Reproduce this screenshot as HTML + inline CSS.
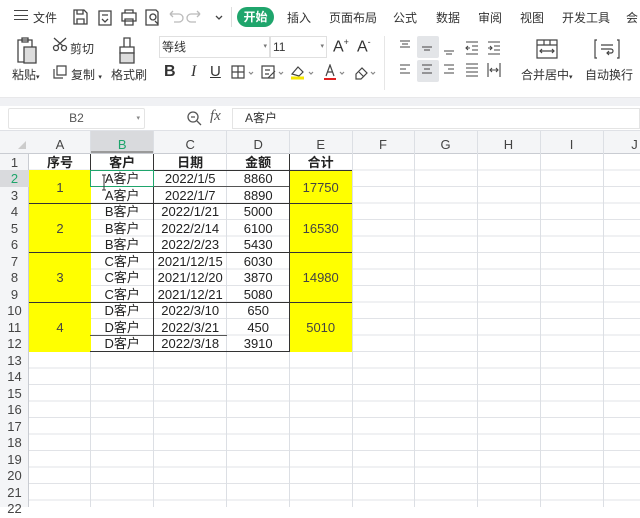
<!DOCTYPE html>
<html><head><meta charset="utf-8"><style>
*{margin:0;padding:0;box-sizing:border-box}
body{width:640px;height:507px;overflow:hidden;background:#fff;font-family:"Liberation Sans","Noto Sans CJK SC",sans-serif;color:#333;position:relative}
.a{position:absolute;white-space:nowrap}
.m{font-size:12px;top:9px;color:#333}
.c{position:absolute;text-align:center;font-size:13px;line-height:16.5px;padding-top:1px;color:#222;white-space:nowrap}
.vl{position:absolute;width:1px;background:#dcdfe4}
.hl{position:absolute;height:1px}
.rn{position:absolute;left:0;width:29px;text-align:center;font-size:13px;line-height:16.5px;padding-top:1px;color:#444}
.ch{position:absolute;top:137px;text-align:center;font-size:13px;color:#444}
</style></head><body>
<div class="a" style="left:14px;top:10px;width:14px;height:10px;border-top:1.5px solid #444;border-bottom:1.5px solid #444"></div>
<div class="a" style="left:14px;top:14.5px;width:14px;height:1.5px;background:#444"></div>
<div class="a m" style="left:33px">文件</div>
<svg class="a" style="left:72px;top:8px" width="160" height="20" fill="none" stroke="#444" stroke-width="1.3">
<path d="M2 2h10l3 3v11H2z M5 2v4h6V2 M5 16v-5h7v5"/>
<path d="M27 3h12v14H27z M30 7h6 M30 11l3 3 3-3"/>
<path d="M50 5h14v8H50z M53 5V2h8v3 M53 11h8v6h-8z"/>
<path d="M74 2h10l2 2v13H74z M81 12a3 3 0 1 0-.1 0 M83 13l3 3"/>
<path d="M98 6h9a4 4 0 0 1 0 8h-5 M98 6l3-3 M98 6l3 3" stroke="#bbb"/>
<path d="M128 6h-9a4 4 0 0 0 0 8h5 M128 6l-3-3 M128 6l-3 3" stroke="#bbb"/>
<path d="M144 8l3 3 3-3"/>
</svg>
<div class="a" style="left:231px;top:7px;width:1px;height:20px;background:#ddd"></div>
<div class="a" style="left:237px;top:7px;width:37px;height:20px;border-radius:10px;background:#1fa56c;color:#fff;font-size:12px;text-align:center;line-height:20px;font-weight:bold">开始</div>
<div class="a m" style="left:287px">插入</div>
<div class="a m" style="left:329px">页面布局</div>
<div class="a m" style="left:393px">公式</div>
<div class="a m" style="left:436px">数据</div>
<div class="a m" style="left:478px">审阅</div>
<div class="a m" style="left:520px">视图</div>
<div class="a m" style="left:562px">开发工具</div>
<div class="a m" style="left:626px">会</div>
<svg class="a" style="left:14px;top:36px" width="140" height="30" fill="none" stroke="#444" stroke-width="1.3">
<path d="M4 4h14v22H4z M8 2h6v4H8z"/><path d="M10 11h12v16H10z" fill="#ddd"/>
<circle cx="42" cy="12" r="2.5"/><circle cx="50" cy="12" r="2.5"/><path d="M40 2l9 8 M52 2l-9 8"/>
<path d="M110 2h6v9h-6z M106 11h14v6h-14z" /><path d="M106 17h14v10h-14z" fill="#ddd"/>
</svg>
<div class="a" style="left:12px;top:66px;font-size:12px">粘贴<span style="font-size:7px">▾</span></div>
<svg class="a" style="left:52px;top:64px" width="16" height="16" fill="none" stroke="#444" stroke-width="1.2"><path d="M5 2h9v9H5z M2 5v9h9"/></svg>
<div class="a" style="left:71px;top:66px;font-size:12px">复制 <span style="font-size:7px">▾</span></div>
<div class="a" style="left:70px;top:40px;font-size:12px">剪切</div>
<div class="a" style="left:111px;top:66px;font-size:12px">格式刷</div>
<div class="a" style="left:159px;top:36px;width:111px;height:22px;border:1px solid #e0e0e0;font-size:12px;line-height:20px;padding-left:2px">等线<span style="position:absolute;right:2px;font-size:7px;color:#777">▾</span></div>
<div class="a" style="left:270px;top:36px;width:57px;height:22px;border:1px solid #e0e0e0;font-size:12px;line-height:20px;padding-left:2px">11<span style="position:absolute;right:2px;font-size:7px;color:#777">▾</span></div>
<div class="a" style="left:333px;top:37px;font-size:16px">A<sup style="font-size:9px">+</sup></div>
<div class="a" style="left:357px;top:37px;font-size:16px">A<sup style="font-size:9px">-</sup></div>
<div class="a" style="left:164px;top:63px;font-size:16px;font-weight:bold">B</div>
<div class="a" style="left:191px;top:63px;font-size:16px;font-style:italic;font-family:'Liberation Serif',serif">I</div>
<div class="a" style="left:210px;top:63px;font-size:15px;text-decoration:underline">U</div>
<svg class="a" style="left:230px;top:64px" width="150" height="18" fill="none" stroke="#444" stroke-width="1.2">
<path d="M2 2h12v12H2z M8 2v12 M2 8h12"/><path d="M19 8l2 2 2-2" stroke="#888"/>
<path d="M32 2h12v12H32z M35 6h5 M35 10h4 M38 14l7-7"/><path d="M49 8l2 2 2-2" stroke="#888"/>
<path d="M62 10l6-7 5 5-4 4z"/><path d="M61 14h13" stroke="#f5e600" stroke-width="3"/><path d="M79 8l2 2 2-2" stroke="#888"/>
<path d="M96 12l4-11 4 11 M97.5 8h5"/><path d="M94 15h12" stroke="#e02020" stroke-width="2"/><path d="M110 8l2 2 2-2" stroke="#888"/>
<path d="M126 10l6-6 5 5-6 6h-5z M129 8l5 5"/><path d="M141 8l2 2 2-2" stroke="#888"/>
</svg>
<div class="a" style="left:384px;top:36px;width:1px;height:54px;background:#e6e6e6"></div>
<div class="a" style="left:417px;top:36px;width:22px;height:22px;background:#e3e5e8;border-radius:2px"></div>
<div class="a" style="left:417px;top:60px;width:22px;height:22px;background:#e3e5e8;border-radius:2px"></div>
<svg class="a" style="left:396px;top:38px" width="130" height="44" fill="none" stroke="#444" stroke-width="1.1">
<path d="M4 3h10 M6 6h6 M4 9h10"/><path d="M26 9h10 M28 12h6"/><path d="M48 13h10 M50 16h6"/>
<path d="M70 4h12 M76 8h6 M76 12h6 M70 16h12 M74 10h-4 M72 8l-2 2 2 2"/>
<path d="M92 4h12 M98 8h6 M98 12h6 M92 16h12 M92 10h4 M94 8l2 2-2 2"/>
<path d="M4 27h10 M4 31h6 M4 35h10"/><path d="M26 27h10 M28 31h6 M26 35h10"/><path d="M48 27h10 M52 31h6 M48 35h10"/>
<path d="M70 26h12 M70 30h12 M70 34h12 M70 38h12"/><path d="M92 25v14 M104 25v14 M95 32h6 M96 30l-2 2 2 2 M100 30l2 2-2 2"/>
</svg>
<svg class="a" style="left:535px;top:38px" width="95" height="24" fill="none" stroke="#444" stroke-width="1.2">
<path d="M2 2h20v18H2z M2 7h20 M9 2v5 M15 2v5 M5 13h14 M7 11l-2 2 2 2 M17 11l2 2-2 2"/>
<path d="M62 2h-2v18h2 M82 2h2v18h-2 M66 7h12 M66 11h10a2 2 0 0 1 0 4h-4 M74 13l-2 2 2 2"/>
</svg>
<div class="a" style="left:521px;top:66px;font-size:12px">合并居中<span style="font-size:7px">▾</span></div>
<div class="a" style="left:585px;top:66px;font-size:12px">自动换行</div>
<div class="a" style="left:0;top:97px;width:640px;height:9px;background:#f0f1f4;border-top:1px solid #e8e8ea"></div>
<div class="a" style="left:8px;top:108px;width:137px;height:21px;border:1px solid #e4e4e4;border-radius:2px;font-size:12px;line-height:19px;text-align:center;color:#555">B2<span style="position:absolute;right:4px;font-size:7px;color:#888">▾</span></div>
<svg class="a" style="left:186px;top:110px" width="16" height="16" fill="none" stroke="#555" stroke-width="1.3"><circle cx="7" cy="7" r="5"/><path d="M11 11l4 4 M5 7h4"/></svg>
<div class="a" style="left:210px;top:108px;font-size:15px;font-style:italic;font-family:'Liberation Serif',serif;color:#555">fx</div>
<div class="a" style="left:232px;top:108px;width:408px;height:21px;border:1px solid #e4e4e4;font-size:12px;line-height:19px;padding-left:12px;color:#333">A客户</div>
<div class="a" style="left:0;top:130px;width:640px;height:24px;background:#f4f5f7;border-top:1px solid #dfe1e6;border-bottom:1px solid #c9ccd2"></div>
<div class="a" style="left:90.7px;top:131px;width:63px;height:22px;background:#d9dadd;border-bottom:2px solid #9a9a9a"></div>
<div class="a" style="left:0;top:154px;width:29px;height:353px;background:#f4f5f7;border-right:1px solid #c9ccd2"></div>
<div class="a" style="left:0;top:170.2px;width:29px;height:16.5px;background:#d9dadd"></div>
<svg class="a" style="left:17px;top:140px" width="10" height="10"><path d="M9 1V9H1z" fill="#ccc"/></svg>
<div class="ch" style="left:29px;width:62px">A</div>
<div class="ch" style="left:90.7px;width:63px;color:#1fa56c">B</div>
<div class="ch" style="left:153.7px;width:73px">C</div>
<div class="ch" style="left:226.7px;width:63px">D</div>
<div class="ch" style="left:289.7px;width:62px">E</div>
<div class="ch" style="left:352px;width:62px">F</div>
<div class="ch" style="left:414px;width:63px">G</div>
<div class="ch" style="left:477px;width:63px">H</div>
<div class="ch" style="left:540px;width:63px">I</div>
<div class="ch" style="left:603px;width:63px">J</div>
<div class="a" style="left:29px;top:153.7px;width:611px;height:354px;background:repeating-linear-gradient(to bottom,transparent 0,transparent 15.5px,#e1e3e7 15.5px,#e1e3e7 16.5px)"></div>
<div class="vl" style="left:90.2px;top:131px;height:376px"></div>
<div class="vl" style="left:153.2px;top:131px;height:376px"></div>
<div class="vl" style="left:226.2px;top:131px;height:376px"></div>
<div class="vl" style="left:289.2px;top:131px;height:376px"></div>
<div class="vl" style="left:351.5px;top:131px;height:376px"></div>
<div class="vl" style="left:414px;top:131px;height:376px"></div>
<div class="vl" style="left:477px;top:131px;height:376px"></div>
<div class="vl" style="left:539.7px;top:131px;height:376px"></div>
<div class="vl" style="left:602.7px;top:131px;height:376px"></div>
<div class="a" style="left:29px;top:170.2px;width:62px;height:181.5px;background:#ffff00"></div>
<div class="a" style="left:289.7px;top:170.2px;width:62px;height:181.5px;background:#ffff00"></div>
<div class="hl" style="left:29px;top:202.7px;width:323px;background:#333"></div>
<div class="hl" style="left:29px;top:252.2px;width:323px;background:#333"></div>
<div class="hl" style="left:29px;top:301.7px;width:323px;background:#333"></div>
<div class="hl" style="left:90px;top:169.7px;width:262px;background:#333"></div>
<div class="hl" style="left:90px;top:351.2px;width:200px;background:#333"></div>
<div class="hl" style="left:90px;top:186.2px;width:200px;background:#555"></div>
<div class="hl" style="left:90px;top:334.7px;width:137px;background:#555"></div>
<div class="vl" style="left:153.2px;top:153.7px;height:198px;background:#333"></div>
<div class="vl" style="left:289.2px;top:153.7px;height:198px;background:#333"></div>
<div class="vl" style="left:90.2px;top:153.7px;height:16.5px;background:#333"></div>
<div class="a" style="left:90.2px;top:169.7px;width:64px;height:17.5px;border:1.5px solid #1fa56c"></div>
<div class="rn" style="top:153.7px">1</div><div class="rn" style="top:170.2px;color:#1fa56c">2</div><div class="rn" style="top:186.7px">3</div><div class="rn" style="top:203.2px">4</div><div class="rn" style="top:219.7px">5</div><div class="rn" style="top:236.2px">6</div><div class="rn" style="top:252.7px">7</div><div class="rn" style="top:269.2px">8</div><div class="rn" style="top:285.7px">9</div><div class="rn" style="top:302.2px">10</div><div class="rn" style="top:318.7px">11</div><div class="rn" style="top:335.2px">12</div><div class="rn" style="top:351.7px">13</div><div class="rn" style="top:368.2px">14</div><div class="rn" style="top:384.7px">15</div><div class="rn" style="top:401.2px">16</div><div class="rn" style="top:417.7px">17</div><div class="rn" style="top:434.2px">18</div><div class="rn" style="top:450.7px">19</div><div class="rn" style="top:467.2px">20</div><div class="rn" style="top:483.7px">21</div><div class="rn" style="top:500.2px">22</div>
<div class="c" style="left:29px;width:62px;top:153.7px;font-weight:bold">序号</div>
<div class="c" style="left:90.7px;width:63px;top:153.7px;font-weight:bold">客户</div>
<div class="c" style="left:153.7px;width:73px;top:153.7px;font-weight:bold">日期</div>
<div class="c" style="left:226.7px;width:63px;top:153.7px;font-weight:bold">金额</div>
<div class="c" style="left:289.7px;width:62px;top:153.7px;font-weight:bold">合计</div>
<div class="c" style="left:29px;width:62px;top:178.5px;color:#444">1</div>
<div class="c" style="left:29px;width:62px;top:219.7px;color:#444">2</div>
<div class="c" style="left:29px;width:62px;top:269.2px;color:#444">3</div>
<div class="c" style="left:29px;width:62px;top:318.7px;color:#444">4</div>
<div class="c" style="left:289.7px;width:62px;top:178.5px;color:#444">17750</div>
<div class="c" style="left:289.7px;width:62px;top:219.7px;color:#444">16530</div>
<div class="c" style="left:289.7px;width:62px;top:269.2px;color:#444">14980</div>
<div class="c" style="left:289.7px;width:62px;top:318.7px;color:#444">5010</div>
<div class="c" style="left:90.7px;width:63px;top:170.2px">A客户</div><div class="c" style="left:153.7px;width:73px;top:170.2px">2022/1/5</div><div class="c" style="left:226.7px;width:63px;top:170.2px">8860</div>
<div class="c" style="left:90.7px;width:63px;top:186.7px">A客户</div><div class="c" style="left:153.7px;width:73px;top:186.7px">2022/1/7</div><div class="c" style="left:226.7px;width:63px;top:186.7px">8890</div>
<div class="c" style="left:90.7px;width:63px;top:203.2px">B客户</div><div class="c" style="left:153.7px;width:73px;top:203.2px">2022/1/21</div><div class="c" style="left:226.7px;width:63px;top:203.2px">5000</div>
<div class="c" style="left:90.7px;width:63px;top:219.7px">B客户</div><div class="c" style="left:153.7px;width:73px;top:219.7px">2022/2/14</div><div class="c" style="left:226.7px;width:63px;top:219.7px">6100</div>
<div class="c" style="left:90.7px;width:63px;top:236.2px">B客户</div><div class="c" style="left:153.7px;width:73px;top:236.2px">2022/2/23</div><div class="c" style="left:226.7px;width:63px;top:236.2px">5430</div>
<div class="c" style="left:90.7px;width:63px;top:252.7px">C客户</div><div class="c" style="left:153.7px;width:73px;top:252.7px">2021/12/15</div><div class="c" style="left:226.7px;width:63px;top:252.7px">6030</div>
<div class="c" style="left:90.7px;width:63px;top:269.2px">C客户</div><div class="c" style="left:153.7px;width:73px;top:269.2px">2021/12/20</div><div class="c" style="left:226.7px;width:63px;top:269.2px">3870</div>
<div class="c" style="left:90.7px;width:63px;top:285.7px">C客户</div><div class="c" style="left:153.7px;width:73px;top:285.7px">2021/12/21</div><div class="c" style="left:226.7px;width:63px;top:285.7px">5080</div>
<div class="c" style="left:90.7px;width:63px;top:302.2px">D客户</div><div class="c" style="left:153.7px;width:73px;top:302.2px">2022/3/10</div><div class="c" style="left:226.7px;width:63px;top:302.2px">650</div>
<div class="c" style="left:90.7px;width:63px;top:318.7px">D客户</div><div class="c" style="left:153.7px;width:73px;top:318.7px">2022/3/21</div><div class="c" style="left:226.7px;width:63px;top:318.7px">450</div>
<div class="c" style="left:90.7px;width:63px;top:335.2px">D客户</div><div class="c" style="left:153.7px;width:73px;top:335.2px">2022/3/18</div><div class="c" style="left:226.7px;width:63px;top:335.2px">3910</div>
<svg class="a" style="left:102px;top:174px" width="10" height="18"><path d="M2 1v15M0 1h4M0 16h4" stroke="#333" fill="none"/></svg>
</body></html>
